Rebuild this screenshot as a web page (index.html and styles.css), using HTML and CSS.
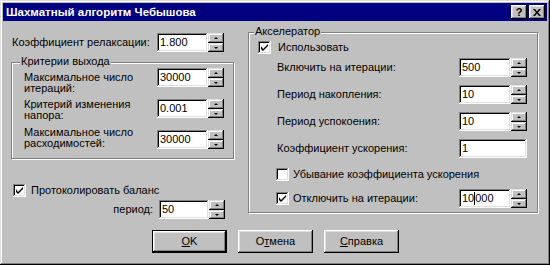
FILE: index.html
```html
<!DOCTYPE html>
<html lang="ru">
<head>
    <meta charset="UTF-8">
    <title>Шахматный алгоритм Чебышова</title>
    <link rel="stylesheet" href="styles.css">
</head>
<body>
    <div class="dialog">
        <div class="titlebar">
            <span class="title">Шахматный алгоритм Чебышова</span>
            <div class="caption-buttons">
                <span class="caption-btn">?</span>
                <span class="caption-btn">
                    <svg width="8" height="7" viewBox="0 0 8 7"><path d="M0 0h2l2 2.5L6 0h2L5 3.5 8 7H6L4 4.5 2 7H0l3-3.5z"/></svg>
                </span>
            </div>
        </div>

        <div class="panes">
            <div class="left">
                <div class="row relax">
                    <span class="lbl">Коэффициент релаксации:</span>
                    <span class="edit">1.800</span>
                    <span class="spin"><span class="up"></span><span class="down"></span></span>
                </div>

                <div class="group exit">
                    <span class="group-title">Критерии выхода</span>
                    <div class="row first">
                        <span class="lbl">Максимальное число итераций:</span>
                        <span class="edit">30000</span>
                        <span class="spin"><span class="up"></span><span class="down"></span></span>
                    </div>
                    <div class="row">
                        <span class="lbl">Критерий изменения напора:</span>
                        <span class="edit">0.001</span>
                        <span class="spin"><span class="up"></span><span class="down"></span></span>
                    </div>
                    <div class="row last">
                        <span class="lbl">Максимальное число расходимостей:</span>
                        <span class="edit">30000</span>
                        <span class="spin"><span class="up"></span><span class="down"></span></span>
                    </div>
                </div>

                <div class="check log">
                    <span class="box"><svg width="7" height="7" viewBox="0 0 7 7"><path d="M0 2v3l2 2 5-5V0L2 5z"/></svg></span>
                    <span>Протоколировать баланс</span>
                </div>

                <div class="row period">
                    <span class="lbl">период:</span>
                    <span class="edit">50</span>
                    <span class="spin"><span class="up"></span><span class="down"></span></span>
                </div>
            </div>

            <div class="group accel">
                <span class="group-title">Акселератор</span>
                <div class="check use">
                    <span class="box"><svg width="7" height="7" viewBox="0 0 7 7"><path d="M0 2v3l2 2 5-5V0L2 5z"/></svg></span>
                    <span>Использовать</span>
                </div>

                <div class="accel-rows">
                    <div class="row">
                        <span class="lbl">Включить на итерации:</span>
                        <span class="edit">500</span>
                        <span class="spin"><span class="up"></span><span class="down"></span></span>
                    </div>
                    <div class="row">
                        <span class="lbl">Период накопления:</span>
                        <span class="edit">10</span>
                        <span class="spin"><span class="up"></span><span class="down"></span></span>
                    </div>
                    <div class="row">
                        <span class="lbl">Период успокоения:</span>
                        <span class="edit">10</span>
                        <span class="spin"><span class="up"></span><span class="down"></span></span>
                    </div>
                    <div class="row">
                        <span class="lbl">Коэффициент ускорения:</span>
                        <span class="edit wide">1</span>
                    </div>
                </div>

                <div class="accel-checks">
                    <div class="check decay">
                        <span class="box"></span>
                        <span>Убывание коэффициента ускорения</span>
                    </div>
                    <div class="row stop">
                        <div class="check">
                            <span class="box"><svg width="7" height="7" viewBox="0 0 7 7"><path d="M0 2v3l2 2 5-5V0L2 5z"/></svg></span>
                            <span>Отключить на итерации:</span>
                        </div>
                        <span class="edit">10<span class="caret"></span>000</span>
                        <span class="spin"><span class="up"></span><span class="down"></span></span>
                    </div>
                </div>
            </div>
        </div>

        <div class="buttons">
            <span class="btn default"><u>О</u>K</span>
            <span class="btn">О<u>т</u>мена</span>
            <span class="btn"><u>С</u>правка</span>
        </div>
    </div>
</body>
</html>
```

FILE: styles.css
```css
* {
    box-sizing: border-box;
}
body {
    margin: 0;
    background: #c0c0c0;
    font: 11px/13px "Liberation Sans", Arial, sans-serif;
    color: #000;
}
.dialog {
    width: 550px;
    height: 265px;
    padding: 3px;
    background: #c0c0c0;
    box-shadow: inset -1px -1px #000, inset 1px 1px #dfdfdf, inset -2px -2px #808080, inset 2px 2px #fff;
}

/* title bar */
.titlebar {
    height: 18px;
    background: #000080;
    color: #fff;
    display: flex;
    align-items: center;
    justify-content: space-between;
    padding: 0 2px 0 3px;
}
.title {
    font-weight: bold;
    font-size: 11.5px;
}
.caption-buttons {
    display: flex;
    gap: 2px;
}
.caption-btn {
    width: 16px;
    height: 14px;
    background: #c0c0c0;
    color: #000;
    font-weight: bold;
    font-size: 11px;
    display: flex;
    align-items: center;
    justify-content: center;
    box-shadow: inset -1px -1px #000, inset 1px 1px #fff, inset -2px -2px #808080, inset 2px 2px #dfdfdf;
}

/* common controls */
.row {
    display: flex;
    align-items: center;
    height: 19px;
}
.edit {
    width: 51px;
    height: 19px;
    flex: none;
    background: #fff;
    padding: 0 3px;
    display: flex;
    align-items: center;
    white-space: nowrap;
    box-shadow: inset -1px -1px #fff, inset 1px 1px #808080, inset -2px -2px #dfdfdf, inset 2px 2px #000;
}
.caret {
    display: inline-block;
    width: 1px;
    height: 13px;
    background: #000;
}
.spin {
    width: 16px;
    height: 19px;
    flex: none;
    display: flex;
    flex-direction: column;
}
.spin span {
    flex: 1;
    display: flex;
    align-items: center;
    justify-content: center;
    background: #c0c0c0;
    box-shadow: inset -1px -1px #000, inset 1px 1px #dfdfdf, inset -2px -2px #808080, inset 2px 2px #fff;
}
.spin .up {
    flex: 0 0 10px;
}
.spin span::after {
    content: "";
    border-left: 2px solid transparent;
    border-right: 2px solid transparent;
}
.spin .up::after {
    border-bottom: 2px solid #000;
}
.spin .down::after {
    border-top: 2px solid #000;
}
.check {
    display: flex;
    align-items: center;
    gap: 5px;
    white-space: nowrap;
}
.box {
    width: 13px;
    height: 13px;
    flex: none;
    background: #fff;
    display: flex;
    align-items: center;
    justify-content: center;
    box-shadow: inset -1px -1px #fff, inset 1px 1px #808080, inset -2px -2px #dfdfdf, inset 2px 2px #000;
}
.group {
    position: relative;
    border: 1px solid #808080;
    box-shadow: inset 1px 1px #fff, 1px 1px #fff;
}
.group-title {
    position: absolute;
    top: -8px;
    padding: 0 1px;
    background: #c0c0c0;
    white-space: nowrap;
}

/* layout */
.panes {
    display: flex;
    align-items: flex-start;
    gap: 14px;
    height: 199px;
    padding-left: 8px;
}
.left {
    width: 223px;
}
.relax {
    margin-top: 12px;
}
.relax .lbl {
    width: 146px;
    padding-left: 1px;
}
.exit {
    margin-top: 10px;
    height: 97px;
    padding: 5px 0 0 12px;
}
.exit .group-title {
    left: 8px;
}
.exit .row {
    height: 31px;
    align-items: flex-start;
}
.exit .lbl {
    width: 133px;
    line-height: 11px;
}
.exit .first .lbl {
    margin-top: 4px;
}
.exit .last .lbl {
    margin-top: -3px;
}
.log {
    margin: 25px 0 0 2px;
}
.period {
    margin-top: 3px;
    justify-content: flex-end;
    padding-right: 9px;
}
.period .lbl {
    margin-right: 6px;
}
.period .edit {
    width: 50px;
}

.accel {
    width: 290px;
    height: 181px;
    margin-top: 11px;
    padding: 8px 10px 0 9px;
}
.accel .group-title {
    left: 5px;
}
.use {
    gap: 7px;
}
.accel-rows {
    margin-top: 4px;
    padding-left: 19px;
    display: flex;
    flex-direction: column;
    gap: 8px;
}
.accel-rows .lbl {
    flex: 1;
}
.accel-rows .edit {
    width: 52px;
}
.accel-rows .edit.wide {
    width: 68px;
}
.accel-checks {
    margin-left: 18px;
}
.decay {
    margin-top: 10px;
    gap: 4px;
}
.stop {
    margin-top: 8px;
}
.stop .check {
    flex: 1;
    gap: 4px;
}
.stop .edit {
    width: 52px;
}

/* buttons */
.buttons {
    display: flex;
    gap: 11px;
    margin-top: 10px;
    padding-left: 149px;
}
.btn {
    width: 75px;
    height: 23px;
    display: flex;
    align-items: center;
    justify-content: center;
    box-shadow: inset -1px -1px #000, inset 1px 1px #fff, inset -2px -2px #808080, inset 2px 2px #dfdfdf;
}
.btn.default {
    border: 1px solid #000;
}
```
